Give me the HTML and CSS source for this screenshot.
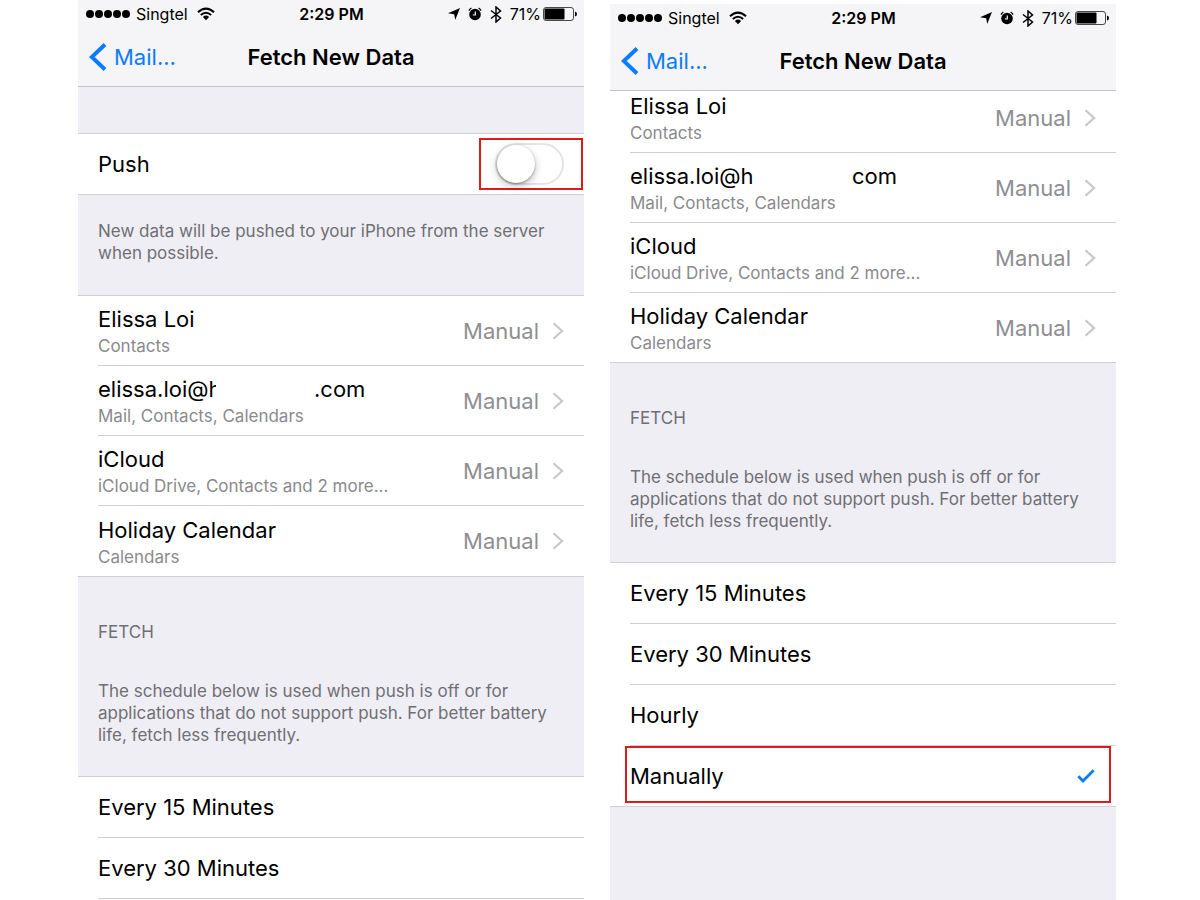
FILE: index.html
```html
<!DOCTYPE html>
<html lang="en">
<head>
<meta charset="utf-8">
<meta name="viewport" content="width=device-width, initial-scale=1">
<title>Fetch New Data</title>
<link rel="stylesheet" href="styles.css">
</head>
<body>
<svg class="defs" aria-hidden="true">
  <symbol id="wifi" viewBox="0 0 18 14"><path d="M1 5.2Q9-2 17 5.2M3.8 8Q9 3.4 14.2 8" fill="none" stroke="currentColor" stroke-width="2"/><path d="M5.9 10Q9 7.2 12.1 10L9 13.2Z" fill="currentColor"/></symbol>
  <symbol id="location" viewBox="0 0 12 12"><path d="M12 0 7.2 12 6.2 6.2 0 5.2Z" fill="currentColor"/></symbol>
  <symbol id="alarm" viewBox="0 0 14 14"><circle cx="7" cy="7.5" r="5.8" fill="currentColor"/><path d="M.9 3.6A7 7 0 0 1 3.4 1.1M13.1 3.6A7 7 0 0 0 10.6 1.1" fill="none" stroke="currentColor" stroke-width="1.2"/><path d="M7.3 4.4V8H4.8" fill="none" stroke="#f5f5f7" stroke-width="1.2"/></symbol>
  <symbol id="bluetooth" viewBox="0 0 12 17"><path d="M1 4.5 10.5 12 6 16V1l4.5 4L1 12.5" fill="none" stroke="currentColor" stroke-width="1.5"/></symbol>
  <symbol id="battery" viewBox="0 0 34 14"><rect x=".5" y=".5" width="30" height="13" rx="2.5" fill="none" stroke="currentColor" stroke-opacity=".7" stroke-width="1"/><rect x="1.5" y="1.5" width="20" height="11" rx="1" fill="currentColor"/><path d="M32 4.5q2 .5 2 2.5t-2 2.5Z" fill="currentColor"/></symbol>
  <symbol id="back" viewBox="0 0 18 28"><path d="M16 1.5 2.8 14 16 26.5" fill="none" stroke="currentColor" stroke-width="4"/></symbol>
  <symbol id="chevron" viewBox="0 0 12 18"><path d="M1.5 1.2 10 9l-8.5 7.8" fill="none" stroke="currentColor" stroke-width="2.2"/></symbol>
  <symbol id="check" viewBox="0 0 18 14"><path d="M1.3 7.3 6 12 16.7 1.3" fill="none" stroke="currentColor" stroke-width="2.8"/></symbol>
</svg>
<main class="screens">
  <section class="phone">
    <header class="top">
      <div class="status">
        <div class="carrier"><span class="signal"><i></i><i></i><i></i><i></i><i></i></span><span>Singtel</span><svg class="i-wifi"><use href="#wifi"/></svg></div>
        <time class="time">2:29 PM</time>
        <div class="indicators"><svg class="i-location"><use href="#location"/></svg><svg class="i-alarm"><use href="#alarm"/></svg><svg class="i-bluetooth"><use href="#bluetooth"/></svg><span class="percent">71%</span><svg class="i-battery"><use href="#battery"/></svg></div>
      </div>
      <nav class="nav"><a class="back" href="#"><svg class="i-back"><use href="#back"/></svg>Mail...</a><h1 class="title">Fetch New Data</h1></nav>
    </header>
    <div class="spacer"></div>
    <div class="group">
      <div class="push"><label for="push">Push</label><span class="mark-toggle"><input class="toggle" type="checkbox" role="switch" id="push"></span></div>
    </div>
    <p class="note">New data will be pushed to your iPhone from the server when possible.</p>
    <div class="group">
      <a class="row account" href="#"><span class="names"><span class="name">Elissa Loi</span><span class="sub">Contacts</span></span><span class="value">Manual</span><svg class="i-chevron"><use href="#chevron"/></svg></a>
      <a class="row account" href="#"><span class="names"><span class="name mail"><span class="user user-cut">elissa.loi@h</span><span>.com</span></span><span class="sub">Mail, Contacts, Calendars</span></span><span class="value">Manual</span><svg class="i-chevron"><use href="#chevron"/></svg></a>
      <a class="row account" href="#"><span class="names"><span class="name">iCloud</span><span class="sub">iCloud Drive, Contacts and 2 more...</span></span><span class="value">Manual</span><svg class="i-chevron"><use href="#chevron"/></svg></a>
      <a class="row account" href="#"><span class="names"><span class="name">Holiday Calendar</span><span class="sub">Calendars</span></span><span class="value">Manual</span><svg class="i-chevron"><use href="#chevron"/></svg></a>
    </div>
    <div class="fetch"><h2 class="heading">FETCH</h2><p class="text">The schedule below is used when push is off or for applications that do not support push. For better battery life, fetch less frequently.</p></div>
    <div class="group group-open">
      <label class="row option">Every 15 Minutes<input class="radio" type="radio" name="left"></label>
      <label class="row option">Every 30 Minutes<input class="radio" type="radio" name="left"></label>
    </div>
  </section>

  <section class="phone phone-scrolled">
    <header class="top">
      <div class="status">
        <div class="carrier"><span class="signal"><i></i><i></i><i></i><i></i><i></i></span><span>Singtel</span><svg class="i-wifi"><use href="#wifi"/></svg></div>
        <time class="time">2:29 PM</time>
        <div class="indicators"><svg class="i-location"><use href="#location"/></svg><svg class="i-alarm"><use href="#alarm"/></svg><svg class="i-bluetooth"><use href="#bluetooth"/></svg><span class="percent">71%</span><svg class="i-battery"><use href="#battery"/></svg></div>
      </div>
      <nav class="nav"><a class="back" href="#"><svg class="i-back"><use href="#back"/></svg>Mail...</a><h1 class="title">Fetch New Data</h1></nav>
    </header>
    <div class="group group-under">
      <a class="row account" href="#"><span class="names"><span class="name">Elissa Loi</span><span class="sub">Contacts</span></span><span class="value">Manual</span><svg class="i-chevron"><use href="#chevron"/></svg></a>
      <a class="row account" href="#"><span class="names"><span class="name mail"><span class="user">elissa.loi@h</span><span>com</span></span><span class="sub">Mail, Contacts, Calendars</span></span><span class="value">Manual</span><svg class="i-chevron"><use href="#chevron"/></svg></a>
      <a class="row account" href="#"><span class="names"><span class="name">iCloud</span><span class="sub">iCloud Drive, Contacts and 2 more...</span></span><span class="value">Manual</span><svg class="i-chevron"><use href="#chevron"/></svg></a>
      <a class="row account" href="#"><span class="names"><span class="name">Holiday Calendar</span><span class="sub">Calendars</span></span><span class="value">Manual</span><svg class="i-chevron"><use href="#chevron"/></svg></a>
    </div>
    <div class="fetch"><h2 class="heading">FETCH</h2><p class="text">The schedule below is used when push is off or for applications that do not support push. For better battery life, fetch less frequently.</p></div>
    <div class="group">
      <label class="row option">Every 15 Minutes<input class="radio" type="radio" name="right"></label>
      <label class="row option">Every 30 Minutes<input class="radio" type="radio" name="right"></label>
      <label class="row option">Hourly<input class="radio" type="radio" name="right"></label>
      <label class="row option marked">Manually<input class="radio" type="radio" name="right" checked><svg class="i-check"><use href="#check"/></svg></label>
    </div>
  </section>
</main>
</body>
</html>
```

FILE: styles.css
```css
* { box-sizing: border-box; }
body { margin: 0; background: #fff; color: #000; font-family: Inter, "Liberation Sans", sans-serif; font-size: 22px; }
a { color: inherit; text-decoration: none; }
h1, h2, p { margin: 0; font-weight: 400; }
svg { display: block; flex: none; }
.defs { position: absolute; width: 0; height: 0; }

.screens { display: grid; grid-template-columns: 1fr 1fr; gap: 26px; min-height: 100vh; padding: 0 84px 0 78px; }
.phone { display: flex; flex-direction: column; min-width: 0; background: #efeef4; }
.phone-scrolled { margin-top: 4px; }

.top { position: relative; z-index: 1; height: 87px; background: #f5f5f7; border-bottom: 1px solid #c3c3c7; }
.status { display: grid; grid-template-columns: 1fr auto 1fr; align-items: center; height: 28px; padding: 0 7px 0 8px; font-size: 16px; }
.carrier { display: flex; align-items: center; gap: 6px; }
.signal { display: flex; gap: 1px; }
.signal i { width: 8px; height: 8px; border-radius: 50%; background: #000; }
.time { font-weight: 600; }
.indicators { display: flex; align-items: center; justify-content: flex-end; gap: 8px; }
.percent { margin-right: -6px; }
.i-wifi { width: 18px; height: 14px; margin-left: 3px; }
.i-location { width: 12px; height: 12px; }
.i-alarm { width: 14px; height: 14px; }
.i-bluetooth { width: 12px; height: 17px; }
.i-battery { width: 34px; height: 14px; }

.nav { display: grid; grid-template-columns: 1fr auto 1fr; align-items: center; height: 58px; padding: 0 11px; }
.back { display: flex; align-items: center; gap: 7px; color: #0a7cff; }
.i-back { width: 18px; height: 28px; }
.title { font-size: 22px; font-weight: 600; }

.spacer { height: 46px; }
.group { background: #fff; border: solid #d0d0d4; border-width: 1px 0; }
.group-open { flex: 1; border-bottom: 0; }
.group-under { margin-top: -8px; border-top: 0; }

.push { display: flex; align-items: center; justify-content: space-between; height: 60px; padding: 0 1px 0 20px; }
.mark-toggle { display: flex; align-items: center; width: 104px; height: 52px; padding-left: 14px; border: 2px solid #e0191c; }
.toggle { appearance: none; width: 69px; height: 42px; margin: 0; border: 2px solid #e4e4e5; border-radius: 21px; background: #fff; }
.toggle::before { content: ""; display: block; width: 38px; height: 38px; border-radius: 50%; background: #fff; box-shadow: 0 3px 8px rgba(0, 0, 0, .25), 0 1px 2px rgba(0, 0, 0, .35); }
.toggle:checked::before { margin-left: auto; }

.note, .text, .heading { color: #6f6f74; font-size: 17px; line-height: 22px; }
.note { padding: 25px 20px 31px; }
.fetch { padding: 44px 20px 30px; }
.text { margin-top: 37px; }

.row { display: flex; align-items: center; margin-left: 20px; padding-right: 20px; border-bottom: 1px solid #d0d0d4; }
.group .row:last-child { border-bottom: 0; }
.group-open .row:last-child { border-bottom: 1px solid #d0d0d4; }
.account { height: 70px; }
.group-under .account:last-child { height: 69px; }
.names { flex: 1; min-width: 0; padding-top: 3px; }
.name { display: block; line-height: 28px; }
.sub { display: block; color: #8a8a8e; font-size: 17px; line-height: 26px; white-space: nowrap; }
.mail { display: flex; }
.user { width: 222px; }
.user-cut { width: 118px; margin-right: 98px; overflow: hidden; }
.value { margin-right: 13px; color: #8e8e93; }
.i-chevron { width: 12px; height: 18px; color: #c7c7cc; }

.option { height: 61px; }
.option.marked { position: relative; height: 60px; padding-right: 21px; }
.radio { appearance: none; width: 0; height: 0; margin: 0 0 0 auto; }
.i-check { width: 18px; height: 14px; color: #0a7cff; }
.marked::after { content: ""; position: absolute; inset: 0 5px 3px -5px; border: 2px solid #e0191c; }
```
